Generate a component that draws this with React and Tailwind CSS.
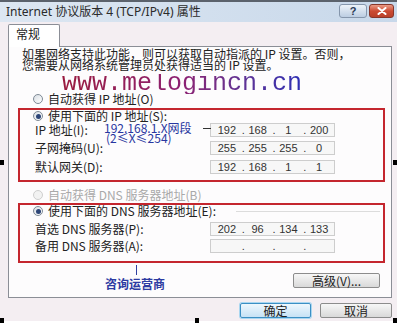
import React from 'react';

const cjk = { fontFamily: '"Noto Sans CJK SC", "Noto Sans", sans-serif' };

const Radio = ({ checked, disabled }) => (
  <span
    className={`inline-flex items-center justify-center w-[10px] h-[10px] rounded-full border shrink-0 ${
      disabled
        ? 'border-[#cfcfcf] bg-[#f2f2f2]'
        : 'border-[#7f8a96] bg-gradient-to-br from-[#d9dee4] to-white'
    }`}
  >
    {checked && <span className="w-[5px] h-[5px] rounded-full bg-[#2d4577]"></span>}
  </span>
);

const IpBox = ({ parts }) => (
  <div className="w-[125px] h-[14px] border border-[#cdcdcd] bg-[#f7f7f7] flex items-center text-[11px] leading-[12px] text-[#333]" style={{ fontFamily: '"Liberation Sans", sans-serif' }}>
    {parts.map((p, i) => (
      <div key={i} className="w-[31px] flex items-center">
        <span className="w-[4px] text-left">{i > 0 ? '.' : ''}</span>
        <span className="flex-1 text-center pr-[3px]">{p}</span>
      </div>
    ))}
  </div>
);

const Row = ({ label, parts, className = '' }) => (
  <div className={`flex items-center h-[14px] ${className}`}>
    <span className="w-[190px] pl-[15px] text-[12px] leading-[12px] text-[#222]">{label}</span>
    <IpBox parts={parts} />
  </div>
);

const GrayButton = ({ children, className = '' }) => (
  <div className={`h-[15px] flex items-center justify-center rounded-[2px] border border-[#8c8c8c] bg-gradient-to-b from-[#f7f7f7] to-[#d9d9d9] text-[12px] leading-[12px] text-[#222] ${className}`}>
    {children}
  </div>
);

const Handle = ({ className }) => <div className={`absolute w-[4px] h-[5px] bg-black ${className}`}></div>;

export default function App() {
  return (
    <div className="relative w-[397px] h-[331px] bg-white overflow-hidden" style={cjk}>
      <div className="h-[321px] flex flex-col bg-[#f4eef2]">
        {/* title bar */}
        <div className="h-[22px] shrink-0 flex border-t-2 border-[#5b626c] bg-gradient-to-r from-[#dde7f2] to-[#c8d8ea]">
          <div className="flex-1 pl-[6px] pt-[2px] text-[12px] leading-[16px] text-[#2a2a2a]" style={{ fontFamily: '"Noto Sans", "Noto Sans CJK SC", sans-serif' }}>
            Internet 协议版本 4 (TCP/IPv4) 属性
          </div>
          <div className="flex gap-[2px] mt-[2px] mr-[3px]">
            <div className="w-[28px] h-[14px] rounded-[3px] border border-[#8596ac] bg-gradient-to-b from-[#edf3f9] to-[#bccde2] flex items-center justify-center text-[11px] leading-[11px] font-bold text-[#2a3a58]" style={{ fontFamily: '"Liberation Sans", sans-serif' }}>
              ?
            </div>
            <div className="w-[25px] h-[14px] rounded-[3px] border border-[#86362a] bg-gradient-to-b from-[#e99a86] via-[#cc4b33] to-[#b94029] flex items-center justify-center">
              <svg width="10" height="8" viewBox="0 0 10 8">
                <path d="M1.5 1 L8.5 7 M8.5 1 L1.5 7" stroke="white" strokeWidth="2" strokeLinecap="round" />
              </svg>
            </div>
          </div>
        </div>

        {/* tab */}
        <div className="pl-[8px] pt-[2px]">
          <div className="relative z-10 -mb-px w-[52px] h-[23px] border border-b-0 border-[#8b8e96] rounded-t-[2px] bg-white pl-[7px] pt-[2px] text-[12px] leading-[14px] text-[#222]">
            常规
          </div>
        </div>

        {/* panel */}
        <div className="ml-[8px] w-[384px] h-[252px] border border-[#8b8e96] bg-[#fdfcfd] flex flex-col">
          <p className="pl-[13px] pt-[1px] text-[12px] leading-[11px] text-[#222]">
            如果网络支持此功能，则可以获取自动指派的 IP 设置。否则，
            <br />
            您需要从网络系统管理员处获得适当的 IP 设置。
          </p>

          <div className="pl-[53px] mt-[3px] h-[20px] leading-[20px]">
            <span className="inline-block text-[25px] bg-clip-text text-transparent bg-gradient-to-r from-[#9a1a3e] via-[#8d1f72] to-[#2b2db4]" style={{ fontFamily: '"Liberation Mono", monospace' }}>
              www.melogincn.cn
            </span>
          </div>

          <div className="h-[12px] flex items-center pl-[24px] gap-[5px] text-[12px] leading-[12px] text-[#222]">
            <Radio />
            <span>自动获得 IP 地址(O)</span>
          </div>

          {/* IP group */}
          <div className="relative mt-[3px] ml-[9px] w-[367px] h-[74px] border-2 border-[#c4262e]">
            <div className="h-[12px] flex items-center pl-[13px] gap-[5px] text-[12px] leading-[12px] text-[#222]">
              <Radio checked />
              <span>使用下面的 IP 地址(S):</span>
            </div>
            <Row label="IP 地址(I):" parts={['192', '168', '1', '200']} className="mt-[1px]" />
            <Row label="子网掩码(U):" parts={['255', '255', '255', '0']} className="mt-[4px]" />
            <Row label="默认网关(D):" parts={['192', '168', '1', '1']} className="mt-[5px]" />

            <div className="absolute left-[84px] top-[13px] text-[12px] leading-[10px] text-[#2836a0]">
              <div>192.168.1.X网段</div>
              <div className="pl-[2px]">(2≤X≤254)</div>
            </div>
            <div className="absolute left-[183px] top-[18px] w-[8px] h-px bg-[#333]"></div>
          </div>

          <div className="mt-[7px] h-[12px] flex items-center pl-[24px] gap-[5px] text-[12px] leading-[12px] text-[#a9a9a9]">
            <Radio disabled />
            <span>自动获得 DNS 服务器地址(B)</span>
          </div>

          {/* DNS group */}
          <div className="mt-[2px] ml-[9px] w-[367px] h-[60px] border-2 border-[#c4262e]">
            <div className="h-[12px] flex items-center pl-[13px] text-[12px] leading-[12px] text-[#222]">
              <Radio checked />
              <span className="ml-[5px]">使用下面的 DNS 服务器地址(E):</span>
              <span className="flex-1 ml-[20px] mr-[3px] h-px bg-[#dcdcdc]"></span>
            </div>
            <Row label="首选 DNS 服务器(P):" parts={['202', '96', '134', '133']} className="mt-[5px]" />
            <Row label="备用 DNS 服务器(A):" parts={['', '', '', '']} className="mt-[3px]" />
          </div>

          <div className="flex justify-between">
            <div className="pl-[96px] flex flex-col">
              <div className="ml-[31px] mt-[2px] w-px h-[10px] bg-[#3040a0]"></div>
              <div className="mt-[2px] text-[12px] leading-[14px] font-bold text-[#2d3ba2]">咨询运营商</div>
            </div>
            <GrayButton className="mt-[10px] mr-[11px] w-[87px]">高级(V)...</GrayButton>
          </div>
        </div>

        {/* dialog buttons */}
        <div className="mt-[5px] flex justify-end gap-[9px] pr-[5px]">
          <div className="w-[71px] h-[15px] flex items-center justify-center rounded-[2px] border border-[#3c8fc4] bg-gradient-to-b from-[#eef7fd] to-[#c6e2f5] shadow-[0_0_0_1px_#a9d6f0] text-[12px] leading-[12px] text-[#222]">
            确定
          </div>
          <GrayButton className="w-[72px]">取消</GrayButton>
        </div>
      </div>

      <Handle className="left-0 top-[160px]" />
      <Handle className="right-0 top-[160px]" />
      <Handle className="left-0 top-[318px]" />
      <Handle className="left-[195px] top-[318px]" />
      <Handle className="right-0 top-[318px]" />
    </div>
  );
}
